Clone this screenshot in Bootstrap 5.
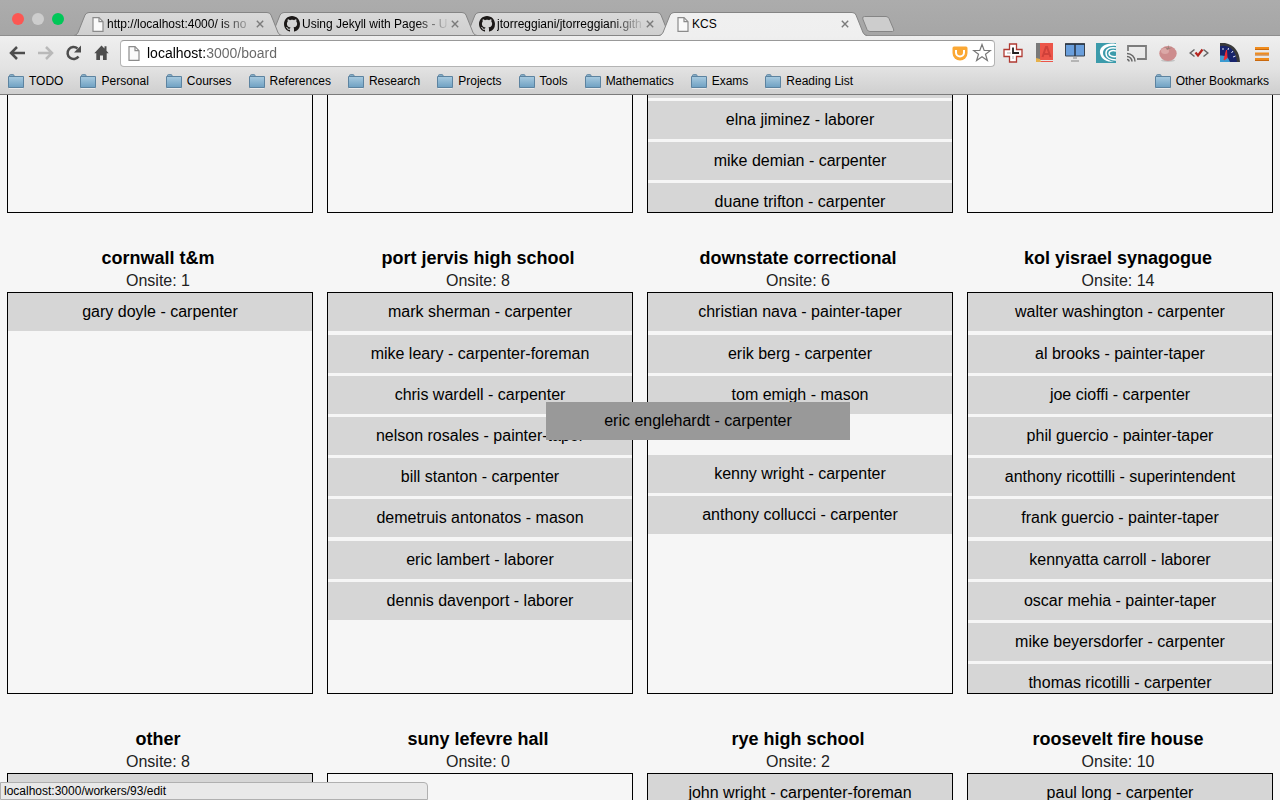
<!DOCTYPE html>
<html lang="en">
<head>
<meta charset="utf-8">
<meta name="viewport" content="width=device-width, initial-scale=1">
<title>KCS</title>
<link href="https://cdn.jsdelivr.net/npm/bootstrap@5.3.0/dist/css/bootstrap.min.css" rel="stylesheet">
<style>
  body { font-family: "Liberation Sans", Arial, sans-serif; font-size: 16px; background: #f6f6f6; color: #000; }
  button { padding: 0; border: 0; background: none; color: inherit; }
  svg { display: block; flex: none; }

  /* browser frame */
  .frame-text { font-size: 12px; line-height: 16px; }
  .tabstrip { height: 35px; background: linear-gradient(#acacac, #a6a6a6); padding-left: 12px; }
  .lights { gap: 8px; margin-top: 13px; width: 62px; }
  .light { width: 12px; height: 12px; border-radius: 50%; }
  .light-close { background: #fc5753; }
  .light-min { background: #cdcdcd; }
  .light-max { background: #00c758; }
  .tab { width: 208px; height: 24px; margin-top: 12px; margin-right: -13px; padding: 0 18px 0 15px; position: relative; }
  .tab:nth-of-type(2) { z-index: 3; }
  .tab:nth-of-type(3) { z-index: 2; }
  .tab:nth-of-type(4) { z-index: 1; }
  .tab.current { z-index: 4; }
  .tab-shape { position: absolute; inset: 0; z-index: -1; }
  .tab-icon { width: 18px; }
  .tab-title { color: #000; text-decoration: none; white-space: nowrap; }
  .tab-fade { -webkit-mask-image: linear-gradient(90deg, #000 114px, transparent 148px); mask-image: linear-gradient(90deg, #000 114px, transparent 148px); }
  .new-tab { margin: 16px 0 0 8px; }

  .toolbar { height: 35px; background: linear-gradient(#efefef, #e2e2e2); border-top: 1px solid #8e8e8e; padding: 0 11px 0 8px; }
  .nav-buttons { gap: 8px; width: 112px; }
  .address { height: 27px; background: #fff; border: 1px solid #b4b4b4; border-top-color: #999; border-radius: 4px; padding: 0 2px 0 7px; }
  .address input { border: 0; outline: 0; padding: 0; margin-left: 7px; font-size: 14px; background: linear-gradient(90deg, #000 58px, #666 58px); -webkit-background-clip: text; background-clip: text; color: transparent; min-width: 0; }
  .extensions { gap: 11px; margin-left: 8px; }
  .bookmarks { height: 25px; background: linear-gradient(#e1e1e1, #cfcfcf); border-bottom: 1px solid #7b7b7b; padding: 0 11px 2px 8px; }
  .bookmarks a { color: #000; gap: 5px; white-space: nowrap; }
  .bookmark-list { gap: 17px; }

  /* crew board */
  .site { padding: 0 7px; position: relative; }
  .site h2 { font-size: 18px; line-height: 24px; font-weight: bold; margin: 33px 0 0; }
  .site p { line-height: 22px; margin: 0; color: #222; }
  .crew { height: 402px; border: 1px solid #000; overflow: hidden; line-height: 38px; }
  .crew li { height: 38px; margin-bottom: 3px; }
  .crew li:nth-child(5n+1) { margin-bottom: 4px; }
  .crew li.vacated { margin-bottom: 0; }
  .worker { display: block; background: #d6d6d6; color: #000; text-decoration: none; }
  .crew-tail { height: 118px; border-top: 0; }
  .crew-tail li.cut { height: 3px; margin-bottom: 3px; background: #d6d6d6; }
  .dragged { position: absolute; z-index: 5; left: -94px; top: 189px; width: calc(100% - 16px); line-height: 38px; background: #999; }
  .status { position: fixed; left: 0; bottom: 0; width: 33.4%; height: 18px; z-index: 6; background: #e9e9e9; border: 1px solid #b0b0b0; border-radius: 0 4px 0 0; padding-left: 3px; font-size: 12px; line-height: 16px; }
</style>
<script src="https://cdn.jsdelivr.net/npm/bootstrap@5.3.0/dist/js/bootstrap.bundle.min.js"></script>
</head>
<body class="vh-100 d-flex flex-column overflow-hidden">

<svg width="0" height="0" class="position-absolute" aria-hidden="true">
  <defs>
    <linearGradient id="folderFill" x1="0" y1="0" x2="0" y2="1"><stop offset="0" stop-color="#a9cbe0"/><stop offset="1" stop-color="#6ea0c2"/></linearGradient>
    <linearGradient id="tabFill" x1="0" y1="0" x2="0" y2="1"><stop offset="0" stop-color="#d9d9d9"/><stop offset="1" stop-color="#cfcfcf"/></linearGradient>
    <linearGradient id="currentFill" x1="0" y1="0" x2="0" y2="1"><stop offset="0" stop-color="#f0f0f0"/><stop offset="1" stop-color="#efefef"/></linearGradient>
  </defs>
  <symbol id="folder" viewBox="0 0 16 15"><path d="M1.500 3V1.500q0-.8.8-.8h2.900q.8 0 .8.800V3" fill="#8db5ce" stroke="#5c83a0"/><path d="M.5 2.500h15v11H.5z" fill="url(#folderFill)" stroke="#5c83a0"/><path d="M1 14.500h14" stroke="#fff" stroke-opacity=".5"/></symbol>
  <symbol id="page" viewBox="0 0 12 15"><path d="M1 .7h6l4 4v9.600H1z" fill="#fafafa" stroke="#8b8b8b" stroke-width="1.200"/><path d="M7 .7v4h4" fill="none" stroke="#8b8b8b" stroke-width="1.200"/></symbol>
  <symbol id="cross" viewBox="0 0 8 8"><path d="M.8.8l6.400 6.400M7.200.8L.8 7.200" stroke="#7b7b7b" stroke-width="1.400"/></symbol>
  <symbol id="octocat" viewBox="0 0 16 16"><path fill="#1b1817" d="M8 0C3.580 0 0 3.580 0 8c0 3.540 2.290 6.530 5.470 7.590.4.070.55-.17.55-.38 0-.19-.01-.82-.01-1.490-2.010.37-2.530-.49-2.690-.94-.09-.23-.48-.94-.82-1.130-.28-.15-.68-.52-.01-.53.63-.01 1.080.58 1.230.82.72 1.210 1.870.87 2.330.66.07-.52.28-.87.51-1.070-1.780-.2-3.640-.89-3.640-3.950 0-.87.31-1.590.82-2.150-.08-.2-.36-1.020.08-2.120 0 0 .67-.21 2.200.82.64-.18 1.320-.27 2-.27s1.360.09 2 .27c1.530-1.040 2.200-.82 2.200-.82.44 1.100.16 1.920.08 2.120.51.56.82 1.270.82 2.150 0 3.070-1.870 3.750-3.650 3.950.29.25.54.73.54 1.480 0 1.070-.01 1.930-.01 2.200 0 .21.15.46.55.38A8 8 0 0 0 16 8c0-4.420-3.580-8-8-8z"/></symbol>
  <symbol id="tabShape" viewBox="0 0 208 24"><path d="M0 23.500C3 23 4 21 5 18L11 3Q12.500.5 15 .5H193Q196 .5 197 3L203 18C204 21 205 23 208 23.500z" fill="url(#tabFill)" stroke="#858585"/></symbol>
  <symbol id="tabShapeCurrent" viewBox="0 0 208 24"><path d="M0 24C3 23.500 4 21 5 18L11 3Q12.500.5 15 .5H193Q196 .5 197 3L203 18C204 21 205 23.500 208 24z" fill="url(#currentFill)"/><path d="M0 23.500C3 23 4 21 5 18L11 3Q12.500.5 15 .5H193Q196 .5 197 3L203 18C204 21 205 23 208 23.500" fill="none" stroke="#858585"/></symbol>
</svg>

<header class="frame-text flex-shrink-0">
  <div class="tabstrip d-flex">
    <div class="lights d-flex flex-shrink-0">
      <button class="light light-close" aria-label="Close window"></button>
      <button class="light light-min" aria-label="Minimize"></button>
      <button class="light light-max" aria-label="Zoom"></button>
    </div>
    <div class="tab d-flex align-items-center flex-shrink-0">
      <svg class="tab-shape" width="208" height="24"><use href="#tabShape"/></svg>
      <span class="tab-icon d-flex justify-content-center"><svg width="12" height="15"><use href="#page"/></svg></span>
      <a class="tab-title tab-fade" href="#">http://localhost:4000/ is no</a>
      <button class="ms-auto" aria-label="Close tab"><svg width="8" height="8"><use href="#cross"/></svg></button>
    </div>
    <div class="tab d-flex align-items-center flex-shrink-0">
      <svg class="tab-shape" width="208" height="24"><use href="#tabShape"/></svg>
      <span class="tab-icon"><svg width="16" height="16"><use href="#octocat"/></svg></span>
      <a class="tab-title tab-fade" href="#">Using Jekyll with Pages - U</a>
      <button class="ms-auto" aria-label="Close tab"><svg width="8" height="8"><use href="#cross"/></svg></button>
    </div>
    <div class="tab d-flex align-items-center flex-shrink-0">
      <svg class="tab-shape" width="208" height="24"><use href="#tabShape"/></svg>
      <span class="tab-icon"><svg width="16" height="16"><use href="#octocat"/></svg></span>
      <a class="tab-title tab-fade" href="#">jtorreggiani/jtorreggiani.gith</a>
      <button class="ms-auto" aria-label="Close tab"><svg width="8" height="8"><use href="#cross"/></svg></button>
    </div>
    <div class="tab current d-flex align-items-center flex-shrink-0">
      <svg class="tab-shape" width="208" height="24"><use href="#tabShapeCurrent"/></svg>
      <span class="tab-icon d-flex justify-content-center"><svg width="12" height="15"><use href="#page"/></svg></span>
      <a class="tab-title" href="#">KCS</a>
      <button class="ms-auto" aria-label="Close tab"><svg width="8" height="8"><use href="#cross"/></svg></button>
    </div>
    <button class="new-tab align-self-start" aria-label="New tab"><svg width="33" height="16"><path d="M2.500.5H24q2 0 3 2l4.500 10.500q1 2.500-1 2.500H8q-2 0-3-2L.8 3Q0 .5 2.500.5z" fill="#cdcdcd" stroke="#858585"/></svg></button>
  </div>

  <div class="toolbar d-flex align-items-center">
    <div class="nav-buttons d-flex align-items-center flex-shrink-0">
      <button aria-label="Back"><svg width="20" height="16"><path d="M17 8H4M9 2L3 8l6 6" fill="none" stroke="#4d4d4d" stroke-width="2.500"/></svg></button>
      <button aria-label="Forward"><svg width="20" height="16"><path d="M2 8h13M10 2l6 6-6 6" fill="none" stroke="#b9b9b9" stroke-width="2.500"/></svg></button>
      <button aria-label="Reload"><svg width="20" height="16"><path d="M14.500 11.500A6 6 0 1 1 13.500 3.500" fill="none" stroke="#4d4d4d" stroke-width="2.500"/><path d="M17 .5v7h-7z" fill="#4d4d4d"/></svg></button>
      <button aria-label="Home"><svg width="20" height="16"><path d="M9.500.5L2.300 8.300h2V15H8v-4.500h3V15h3.700V8.300h2L14.500 5.800V1.300h-2v2.300z" fill="#4d4d4d"/></svg></button>
    </div>
    <div class="address d-flex align-items-center flex-grow-1">
      <svg width="12" height="15"><use href="#page"/></svg>
      <input class="flex-grow-1" type="text" value="localhost:3000/board" aria-label="Address">
      <button aria-label="Saved item"><svg width="16" height="15"><path d="M2 .5h12q1.500 0 1.500 1.500v5a7.500 7.500 0 0 1-15 0V2Q.5.500 2 .5z" fill="#fba834"/><path d="M4 4v2.500a4 4 0 0 0 8 0V4" fill="none" stroke="#fff" stroke-width="2"/></svg></button>
      <button class="ms-1" aria-label="Bookmark this page"><svg width="20" height="20"><path d="M10 1.500l2.200 6h6.300l-5 3.800 1.900 6.200L10 13.800l-5.400 3.700 1.900-6.200-5-3.800h6.300z" fill="#fff" stroke="#777" stroke-width="1.200"/></svg></button>
    </div>
    <div class="extensions d-flex align-items-center flex-shrink-0">
      <button aria-label="Time tracker"><svg width="20" height="20"><path d="M6.500 1h7v5.500H19v7h-5.500V19h-7v-5.500H1v-7h5.500z" fill="#fff" stroke="#b03a32" stroke-width="1.300"/><path d="M10 4.500V10h6" fill="none" stroke="#222" stroke-width="1.800"/><path d="M4 10h4M10 13v3" stroke="#aaa"/></svg></button>
      <button aria-label="Dictionary"><svg width="20" height="20"><path d="M2 0h4v17H2z" fill="#7a7a7a"/><path d="M6 0h13v17H6z" fill="#ec5549"/><path d="M5 18.500h14" stroke="#ec5549"/><path d="M8.500 14l3.500-10h1L16.500 14M10 11h5" fill="none" stroke="#cf413a" stroke-width="2"/><path d="M2 15l4 1 1 3H2z" fill="#e6b14b"/></svg></button>
      <button aria-label="Screens"><svg width="20" height="20"><path d="M.5 1h19v12H.5z" fill="#6a9fdc" stroke="#39434f"/><path d="M10 1v12M0 1h20" stroke="#29323e" stroke-width="1.500"/><path d="M8 15h4M6 18h8" stroke="#b5b5b5" stroke-width="2"/></svg></button>
      <button aria-label="Swirl"><svg width="20" height="20"><path d="M0 0h20v20H0z" fill="#3c9bab"/><path d="M20 1C10-1 3 4 4 10c1 6 6 9 14 9C11 17 7 14 7 10c0-5 6-8 13-7z" fill="#fff"/><path d="M20 5c-6-1-10 1-10 5 0 5 5 7 10 7M20 8c-4-1-7 0-7 2.500S17 14 20 13.500" fill="none" stroke="#fff" stroke-width="1.500"/></svg></button>
      <button aria-label="Cast"><svg width="20" height="20"><path d="M1 8V3h18v13h-9" fill="none" stroke="#7c7c7c" stroke-width="1.800"/><path d="M0 16.500a2 2 0 0 1 2 2M0 13.500a5 5 0 0 1 5 5M0 10.500a8 8 0 0 1 8 8" fill="none" stroke="#666" stroke-width="1.500"/></svg></button>
      <button aria-label="Tomato timer"><svg width="20" height="20"><ellipse cx="10" cy="17.500" rx="7" ry="1.500" fill="#c4c4c4"/><ellipse cx="10" cy="10.500" rx="8.700" ry="7.500" fill="#cd8c8d"/><ellipse cx="7" cy="8" rx="4" ry="3" fill="#dba8a7"/><path d="M6 4l4 1 .5-3.500.5 3.500 3.500-.5L11 6 9 7 8 5z" fill="#9a7f76"/></svg></button>
      <button aria-label="Validator"><svg width="20" height="20"><path d="M5.500 6.500L1.200 10l4.300 3.500M14.500 6.500l4.300 3.500-4.300 3.500" fill="none" stroke="#666" stroke-width="1.500"/><path d="M6.500 9.500l2.500 3 4.500-6" fill="none" stroke="#b5251f" stroke-width="2.200"/></svg></button>
      <button aria-label="Speed test"><svg width="20" height="20"><path d="M0 0h5q14 3 15 19H0z" fill="#3a3a3a"/><path d="M0 3q15-2 17 16H0z" fill="#18246c"/><path d="M0 12.500q8-1 10 6.500H0z" fill="#3b9bd1"/><path d="M4 17L6.500 7l.5 8z" fill="#f02c31" stroke="#f02c31"/><path d="M3 5v2M8.500 5L8 7M13 8l-1.500 2M15.500 13l-2.500 1" stroke="#dfe2f2"/></svg></button>
      <button class="ms-1" aria-label="Menu"><svg width="14" height="16"><path d="M0 3h14M0 8.500h14M0 14h14" stroke="#f08c1c" stroke-width="2"/><path d="M0 4.500h14M0 10h14M0 15.500h14" stroke="#c9690f"/></svg></button>
    </div>
  </div>

  <nav class="bookmarks d-flex align-items-center justify-content-between" aria-label="Bookmarks">
    <div class="bookmark-list d-flex">
      <a class="d-flex align-items-center text-decoration-none" href="#"><svg width="16" height="15"><use href="#folder"/></svg>TODO</a>
      <a class="d-flex align-items-center text-decoration-none" href="#"><svg width="16" height="15"><use href="#folder"/></svg>Personal</a>
      <a class="d-flex align-items-center text-decoration-none" href="#"><svg width="16" height="15"><use href="#folder"/></svg>Courses</a>
      <a class="d-flex align-items-center text-decoration-none" href="#"><svg width="16" height="15"><use href="#folder"/></svg>References</a>
      <a class="d-flex align-items-center text-decoration-none" href="#"><svg width="16" height="15"><use href="#folder"/></svg>Research</a>
      <a class="d-flex align-items-center text-decoration-none" href="#"><svg width="16" height="15"><use href="#folder"/></svg>Projects</a>
      <a class="d-flex align-items-center text-decoration-none" href="#"><svg width="16" height="15"><use href="#folder"/></svg>Tools</a>
      <a class="d-flex align-items-center text-decoration-none" href="#"><svg width="16" height="15"><use href="#folder"/></svg>Mathematics</a>
      <a class="d-flex align-items-center text-decoration-none" href="#"><svg width="16" height="15"><use href="#folder"/></svg>Exams</a>
      <a class="d-flex align-items-center text-decoration-none" href="#"><svg width="16" height="15"><use href="#folder"/></svg>Reading List</a>
    </div>
    <a class="d-flex align-items-center text-decoration-none" href="#"><svg width="16" height="15"><use href="#folder"/></svg>Other Bookmarks</a>
  </nav>
</header>

<main class="flex-grow-1 overflow-hidden text-center">
  <div class="row g-0">
    <section class="site col-3"><ul class="crew crew-tail list-unstyled m-0"></ul></section>
    <section class="site col-3"><ul class="crew crew-tail list-unstyled m-0"></ul></section>
    <section class="site col-3">
      <ul class="crew crew-tail list-unstyled m-0">
        <li class="cut"></li>
        <li><a class="worker" href="#">elna jiminez - laborer</a></li>
        <li><a class="worker" href="#">mike demian - carpenter</a></li>
        <li><a class="worker" href="#">duane trifton - carpenter</a></li>
      </ul>
    </section>
    <section class="site col-3"><ul class="crew crew-tail list-unstyled m-0"></ul></section>

    <section class="site col-3">
      <h2 class="pe-1">cornwall t&amp;m</h2>
      <p class="pe-1">Onsite: 1</p>
      <ul class="crew list-unstyled m-0">
        <li><a class="worker" href="#">gary doyle - carpenter</a></li>
      </ul>
    </section>
    <section class="site col-3">
      <h2 class="pe-1">port jervis high school</h2>
      <p class="pe-1">Onsite: 8</p>
      <ul class="crew list-unstyled m-0">
        <li><a class="worker" href="#">mark sherman - carpenter</a></li>
        <li><a class="worker" href="#">mike leary - carpenter-foreman</a></li>
        <li><a class="worker" href="#">chris wardell - carpenter</a></li>
        <li><a class="worker" href="#">nelson rosales - painter-taper</a></li>
        <li><a class="worker" href="#">bill stanton - carpenter</a></li>
        <li><a class="worker" href="#">demetruis antonatos - mason</a></li>
        <li><a class="worker" href="#">eric lambert - laborer</a></li>
        <li><a class="worker" href="#">dennis davenport - laborer</a></li>
      </ul>
    </section>
    <section class="site col-3">
      <h2 class="pe-1">downstate correctional</h2>
      <p class="pe-1">Onsite: 6</p>
      <ul class="crew list-unstyled m-0">
        <li><a class="worker" href="#">christian nava - painter-taper</a></li>
        <li><a class="worker" href="#">erik berg - carpenter</a></li>
        <li><a class="worker" href="#">tom emigh - mason</a></li>
        <li class="vacated"></li>
        <li><a class="worker" href="#">kenny wright - carpenter</a></li>
        <li><a class="worker" href="#">anthony collucci - carpenter</a></li>
      </ul>
      <a class="worker dragged" href="#">eric englehardt - carpenter</a>
    </section>
    <section class="site col-3">
      <h2 class="pe-1">kol yisrael synagogue</h2>
      <p class="pe-1">Onsite: 14</p>
      <ul class="crew list-unstyled m-0">
        <li><a class="worker" href="#">walter washington - carpenter</a></li>
        <li><a class="worker" href="#">al brooks - painter-taper</a></li>
        <li><a class="worker" href="#">joe cioffi - carpenter</a></li>
        <li><a class="worker" href="#">phil guercio - painter-taper</a></li>
        <li><a class="worker" href="#">anthony ricottilli - superintendent</a></li>
        <li><a class="worker" href="#">frank guercio - painter-taper</a></li>
        <li><a class="worker" href="#">kennyatta carroll - laborer</a></li>
        <li><a class="worker" href="#">oscar mehia - painter-taper</a></li>
        <li><a class="worker" href="#">mike beyersdorfer - carpenter</a></li>
        <li><a class="worker" href="#">thomas ricotilli - carpenter</a></li>
      </ul>
    </section>

    <section class="site col-3">
      <h2 class="pe-1">other</h2>
      <p class="pe-1">Onsite: 8</p>
      <ul class="crew list-unstyled m-0"><li><a class="worker" href="#">&nbsp;</a></li></ul>
    </section>
    <section class="site col-3">
      <h2 class="pe-1">suny lefevre hall</h2>
      <p class="pe-1">Onsite: 0</p>
      <ul class="crew list-unstyled m-0"></ul>
    </section>
    <section class="site col-3">
      <h2 class="pe-1">rye high school</h2>
      <p class="pe-1">Onsite: 2</p>
      <ul class="crew list-unstyled m-0"><li><a class="worker" href="#">john wright - carpenter-foreman</a></li></ul>
    </section>
    <section class="site col-3">
      <h2 class="pe-1">roosevelt fire house</h2>
      <p class="pe-1">Onsite: 10</p>
      <ul class="crew list-unstyled m-0"><li><a class="worker" href="#">paul long - carpenter</a></li></ul>
    </section>
  </div>
</main>

<div class="status">localhost:3000/workers/93/edit</div>
</body>
</html>
